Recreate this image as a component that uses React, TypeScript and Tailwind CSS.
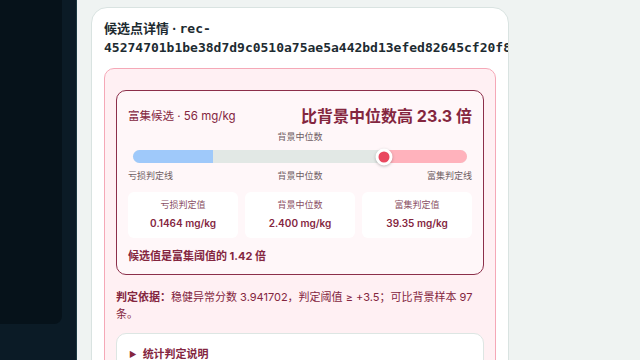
const rose = 'text-[#84263f]'

function Threshold({ label, value }: { label: string; value: string }) {
  return (
    <div className="flex flex-col items-center rounded-md bg-white pt-[6px] pb-[8px]">
      <span className="text-[9px] leading-[13px] text-[#8a5064]">{label}</span>
      <span className={`mt-[6px] text-[10px] leading-[13px] font-semibold ${rose}`}>{value}</span>
    </div>
  )
}

export default function App() {
  return (
    <div
      className="flex h-[360px] w-[640px] overflow-hidden"
      style={{ fontFamily: 'Inter, "Noto Sans CJK SC", sans-serif' }}
    >
      <aside className="w-[77px] shrink-0 border-r border-[#1c3943] bg-[#0b1b26]">
        <div className="h-[324px] w-[62px] rounded-br-lg bg-[#06121a]" />
      </aside>

      <main className="flex-1 bg-[#eff3f2] pl-[14px] pt-[7px]">
        <section className="h-[400px] w-[418px] overflow-hidden rounded-2xl border border-[#d9e3e1] bg-white px-3 pt-[11px]">
          <h1 className="text-[13px] leading-[18px] font-bold text-[#1d2b31]">
            候选点详情 ·{' '}
            <span style={{ fontFamily: '"DejaVu Sans Mono", monospace' }}>
              rec-45274701b1be38d7d9c0510a75ae5a442bd13efed82645cf20f8
            </span>
          </h1>

          <div className="mt-[11px] rounded-[10px] border border-[#f5a8b7] bg-[#fff0f3] px-[11px] pt-[21px]">
            <div className="rounded-[10px] border border-[#8c2f4a] bg-[#fff7f9] px-[11px] pt-[13px] pb-[10px]">
              <div className="flex items-center justify-between">
                <span className={`text-[11.5px] leading-6 ${rose}`}>富集候选 · 56 mg/kg</span>
                <span className={`text-[16px] leading-6 font-bold ${rose}`}>比背景中位数高 23.3 倍</span>
              </div>

              <div className="mt-[3px] text-center text-[9px] leading-3 text-[#6e5d63]">背景中位数</div>

              <div className="relative mx-[5px] mt-[7px] flex h-[13px] rounded-full bg-[#e2e8e5]">
                <div className="w-[80px] rounded-l-full bg-[#9fc9fa]" />
                <div className="flex-1" />
                <div className="w-[84px] rounded-r-full bg-[#ffb2bc]" />
                <span className="absolute top-1/2 left-[251px] h-[17px] w-[17px] -translate-x-1/2 -translate-y-1/2 rounded-full border-[3px] border-white bg-[#e9485f] shadow-[0_1px_3px_rgba(0,0,0,0.25)]" />
              </div>

              <div className="mt-[7px] flex justify-between text-[9px] leading-3 text-[#6e5d63]">
                <span>亏损判定线</span>
                <span>背景中位数</span>
                <span>富集判定线</span>
              </div>

              <div className="mt-[10px] grid grid-cols-3 gap-[7px]">
                <Threshold label="亏损判定值" value="0.1464 mg/kg" />
                <Threshold label="背景中位数" value="2.400 mg/kg" />
                <Threshold label="富集判定值" value="39.35 mg/kg" />
              </div>

              <p className={`mt-[10px] text-[11px] leading-[16px] font-bold ${rose}`}>候选值是富集阈值的 1.42 倍</p>
            </div>

            <p className={`mt-[14px] text-[11px] leading-[17px] ${rose}`}>
              <strong>判定依据：</strong>稳健异常分数 3.941702，判定阈值 ≥ +3.5；可比背景样本 97 条。
            </p>

            <div className="mt-[10px] rounded-[10px] border border-[#dde6e3] bg-white px-3 pt-[12px] pb-4">
              <div className={`flex items-center gap-[6px] text-[11px] leading-4 font-bold ${rose}`}>
                <span className="text-[8px]">▶</span>
                统计判定说明
              </div>
            </div>
          </div>
        </section>
      </main>
    </div>
  )
}
